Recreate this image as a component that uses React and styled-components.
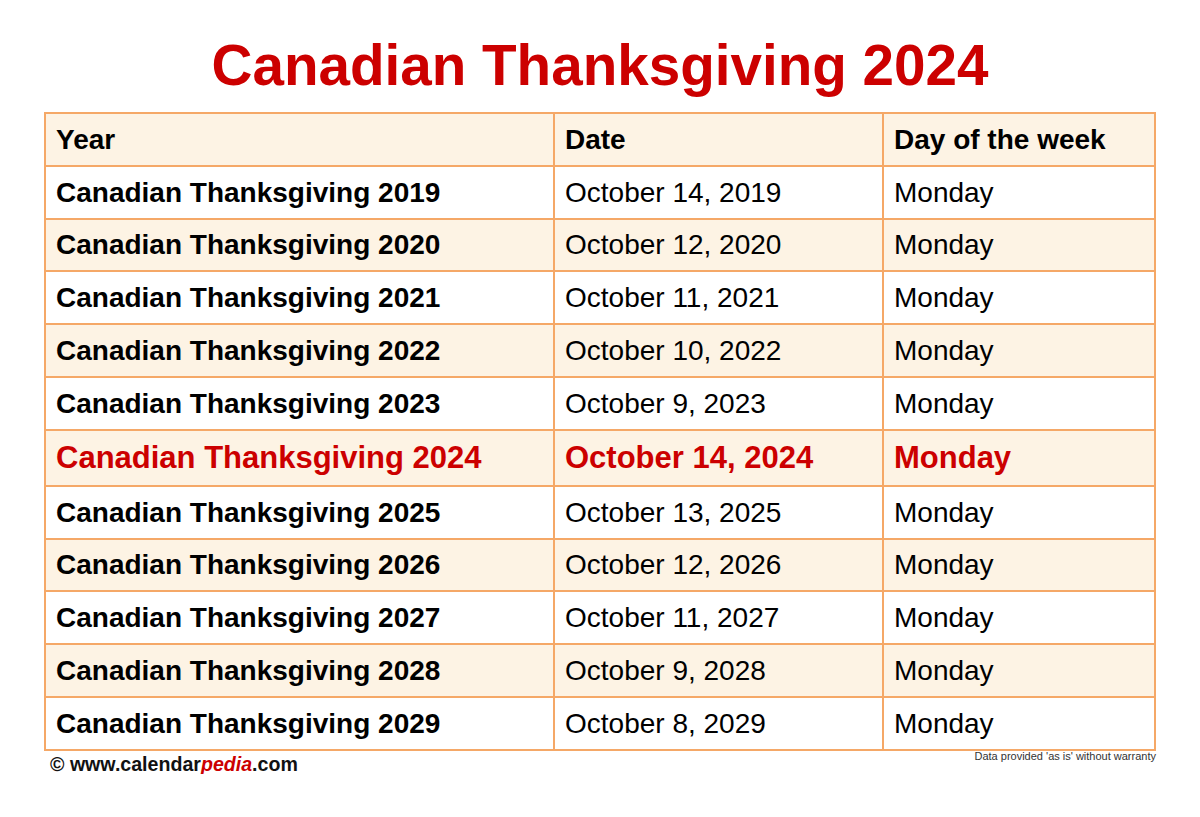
import * as React from "react";
import styled, { createGlobalStyle } from "styled-components";

const GlobalStyle = createGlobalStyle`
  html, body {
    margin: 0;
    padding: 0;
    background: #ffffff;
  }
  body {
    font-family: "Liberation Sans", Arial, sans-serif;
    color: #000;
  }
`;

const Page = styled.main`
  width: 1200px;
  padding-top: 38px;
`;

const Title = styled.h1`
  margin: 0 0 18px;
  font-size: 56.6px;
  line-height: 56px;
  font-weight: 700;
  text-align: center;
  color: #cc0000;
`;

const Table = styled.div`
  display: grid;
  grid-template-columns: 509px 329px 272px;
  width: 1110px;
  margin-left: 44px;
  border-top: 2px solid #f5a867;
  border-left: 2px solid #f5a867;
`;

const Cell = styled.div`
  display: flex;
  align-items: center;
  box-sizing: border-box;
  height: ${(p) => (p.$highlight ? "56.25px" : "52.75px")};
  padding: 1px 10px 0;
  border-right: 2px solid #f5a867;
  border-bottom: 2px solid #f5a867;
  background: ${(p) => (p.$shade ? "#fdf3e4" : "#ffffff")};
  font-size: ${(p) => (p.$highlight ? "31px" : "28px")};
  font-weight: ${(p) => (p.$bold || p.$highlight ? 700 : 400)};
  color: ${(p) => (p.$highlight ? "#cc0000" : "#000")};
  white-space: nowrap;
`;

const Footer = styled.div`
  display: flex;
  justify-content: space-between;
  align-items: flex-start;
  width: 1112px;
  margin-left: 44px;
`;

const Credit = styled.div`
  margin-top: 3px;
  padding-left: 6px;
  font-size: 19.6px;
  line-height: 20px;
  font-weight: 700;
  color: #111;
`;

const Brand = styled.span`
  color: #cc0000;
  font-style: italic;
`;

const Disclaimer = styled.div`
  margin-top: 0;
  font-size: 11px;
  line-height: 11px;
  color: #333;
`;

const rows = [
  { year: 2019, date: "October 14, 2019" },
  { year: 2020, date: "October 12, 2020" },
  { year: 2021, date: "October 11, 2021" },
  { year: 2022, date: "October 10, 2022" },
  { year: 2023, date: "October 9, 2023" },
  { year: 2024, date: "October 14, 2024", current: true },
  { year: 2025, date: "October 13, 2025" },
  { year: 2026, date: "October 12, 2026" },
  { year: 2027, date: "October 11, 2027" },
  { year: 2028, date: "October 9, 2028" },
  { year: 2029, date: "October 8, 2029" },
];

const App = () => {
  return (
    <Page>
      <GlobalStyle />
      <Title>Canadian Thanksgiving 2024</Title>
      <Table>
        <Cell $shade $bold>Year</Cell>
        <Cell $shade $bold>Date</Cell>
        <Cell $shade $bold>Day of the week</Cell>
        {rows.map((row, i) => {
          const shade = i % 2 === 1;
          return (
            <React.Fragment key={row.year}>
              <Cell $shade={shade} $bold $highlight={row.current}>
                Canadian Thanksgiving {row.year}
              </Cell>
              <Cell $shade={shade} $highlight={row.current}>
                {row.date}
              </Cell>
              <Cell $shade={shade} $highlight={row.current}>
                Monday
              </Cell>
            </React.Fragment>
          );
        })}
      </Table>
      <Footer>
        <Credit>
          © www.calendar<Brand>pedia</Brand>.com
        </Credit>
        <Disclaimer>Data provided 'as is' without warranty</Disclaimer>
      </Footer>
    </Page>
  );
};

export default App;
